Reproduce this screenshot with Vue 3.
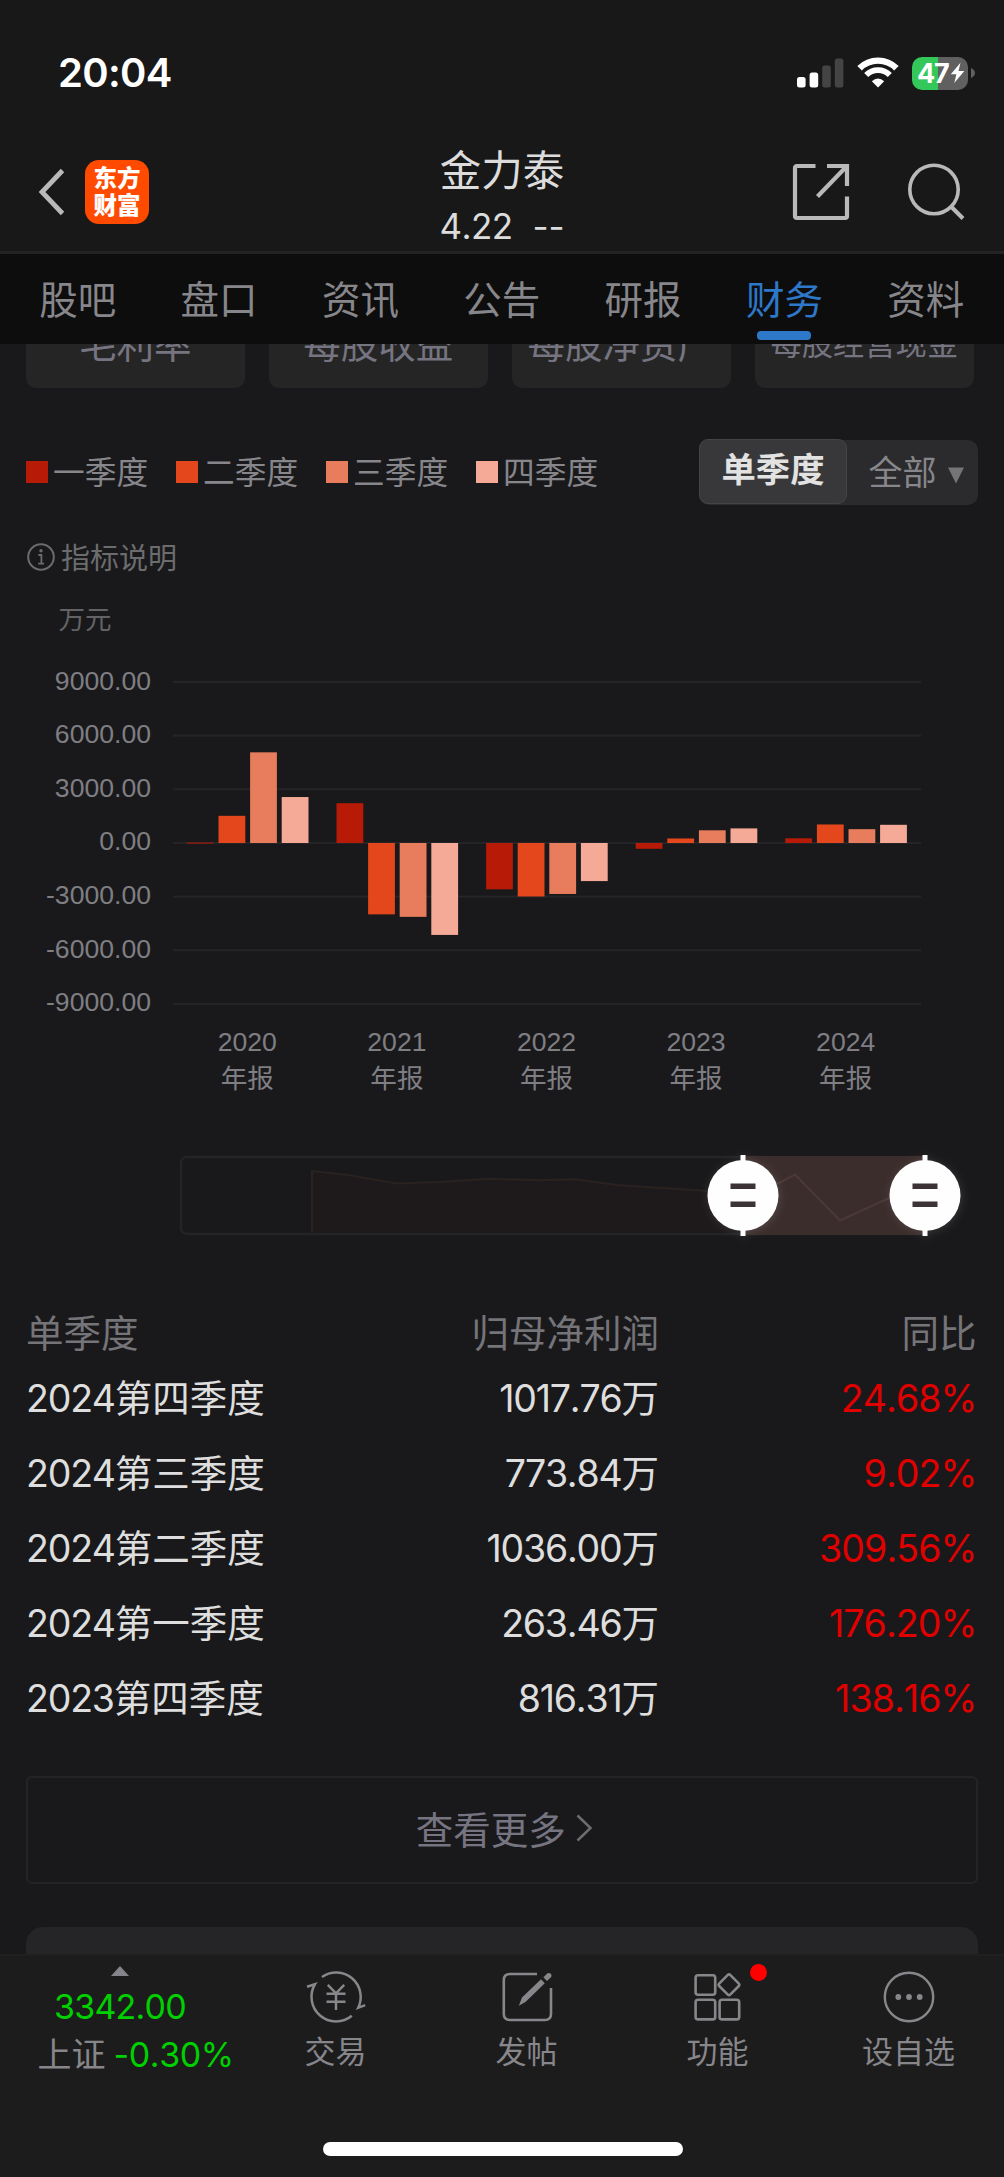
<script setup>
const tabs = ['股吧', '盘口', '资讯', '公告', '研报', '财务', '资料']
const activeTab = '财务'
const chips = ['毛利率', '每股收益', '每股净资产', '每股经营现金']

const quarters = [
  { name: '一季度', color: '#b71a06' },
  { name: '二季度', color: '#e5471c' },
  { name: '三季度', color: '#e77d5d' },
  { name: '四季度', color: '#f5aa98' },
]

const ticks = [9000, 6000, 3000, 0, -3000, -6000, -9000]
const years = [
  { year: 2020, values: [25, 1520, 5070, 2570] },
  { year: 2021, values: [2225, -3990, -4130, -5140] },
  { year: 2022, values: [-2590, -2990, -2850, -2130] },
  { year: 2023, values: [-325, 253, 709.8, 816.31] },
  { year: 2024, values: [263.46, 1036, 773.84, 1017.76] },
]

const unit = 53.65 / 3000
const zeroY = 162
const bars = years.flatMap((group, g) =>
  group.values.map((value, q) => ({
    key: `${group.year}-${q}`,
    x: 13.9 + g * 149.6 + q * 31.6,
    y: value > 0 ? zeroY - value * unit : zeroY,
    height: Math.max(Math.abs(value) * unit, 1),
    color: quarters[q].color,
  })),
)

const rows = [
  { period: '2024', label: '第四季度', profit: '1017.76', change: '24.68%' },
  { period: '2024', label: '第三季度', profit: '773.84', change: '9.02%' },
  { period: '2024', label: '第二季度', profit: '1036.00', change: '309.56%' },
  { period: '2024', label: '第一季度', profit: '263.46', change: '176.20%' },
  { period: '2023', label: '第四季度', profit: '816.31', change: '138.16%' },
]
</script>

<template>
  <div class="screen">
    <div class="status">
      <span class="time">20:04</span>
      <div class="status-icons">
        <svg class="signal" width="47" height="30" viewBox="0 0 47 30">
          <rect x="0" y="19" width="8.6" height="10.5" rx="2.5" fill="#fff" />
          <rect x="12.6" y="14.5" width="8.6" height="15" rx="2.5" fill="#fff" />
          <rect x="25.2" y="7.5" width="8.6" height="22" rx="2.5" fill="#444" />
          <rect x="37.8" y="0.5" width="8.6" height="29" rx="2.5" fill="#444" />
        </svg>
        <svg class="wifi" width="42" height="32" viewBox="0 0 42 32">
          <g fill="none" stroke="#fff">
            <path d="M2.6 11.3 A26 26 0 0 1 39.4 11.3" stroke-width="6.4" />
            <path d="M9.2 18 A16.8 16.8 0 0 1 32.8 18" stroke-width="5.8" />
          </g>
          <path d="M21 30.5 L14.8 24.2 Q21 18.8 27.2 24.2 Z" fill="#fff" />
        </svg>
        <div class="battery">
          <span>47</span>
          <svg width="15" height="22" viewBox="0 0 15 22">
            <path d="M10.5 0.8 L0.8 12.2 H6.4 L4.3 21 L14.3 9.1 H8.5 Z" fill="#fff" />
          </svg>
        </div>
        <svg class="cap" width="4" height="12" viewBox="0 0 4 12">
          <path d="M0 1 Q4 3 4 6 Q4 9 0 11 Z" fill="#606060" />
        </svg>
      </div>
    </div>

    <header class="header">
      <div class="header-side">
        <svg width="26" height="48" viewBox="0 0 26 48">
          <path d="M24.5 2.5 L4 24 L24.5 45.5" fill="none" stroke="#b9b9b9" stroke-width="4.8" />
        </svg>
        <div class="logo"><span>东方</span><span>财富</span></div>
      </div>
      <div class="title">
        <div class="name">金力泰</div>
        <div class="price"><span>4.22</span><span class="dashes">--</span></div>
      </div>
      <div class="header-side right">
        <svg width="58" height="58" viewBox="0 0 58 58" fill="none" stroke="#b9b9b9" stroke-width="4.2">
          <path d="M23.5 3 H5 Q3 3 3 5 V53 Q3 55 5 55 H53 Q55 55 55 53 V33.5" />
          <path d="M35 3 H55 V23" />
          <path d="M54 4 L25.5 33.5" />
        </svg>
        <svg width="58" height="58" viewBox="0 0 58 58" fill="none" stroke="#b9b9b9">
          <circle cx="27" cy="26.5" r="24.2" stroke-width="3.6" />
          <path d="M44 43.5 L56 55.5" stroke-width="4" />
        </svg>
      </div>
    </header>

    <nav class="tabs">
      <div v-for="tab in tabs" :key="tab" class="tab" :class="{ active: tab === activeTab }">{{ tab }}</div>
    </nav>

    <main class="content">
      <div class="chips">
        <div v-for="(chip, i) in chips" :key="chip" class="chip" :class="{ small: i === 3 }">{{ chip }}</div>
      </div>

      <div class="legend-row">
        <div class="legend">
          <div v-for="q in quarters" :key="q.name" class="legend-item">
            <i :style="{ background: q.color }"></i><span>{{ q.name }}</span>
          </div>
        </div>
        <div class="segment">
          <div class="segment-on">单季度</div>
          <div class="segment-off">
            <span>全部</span>
            <svg width="16" height="17" viewBox="0 0 16 17"><path d="M0 0.5 H16 L8 16.5 Z" fill="#757575" /></svg>
          </div>
        </div>
      </div>

      <div class="note">
        <svg width="30" height="30" viewBox="0 0 30 30">
          <circle cx="15" cy="15" r="12.8" fill="none" stroke="#6c6c6e" stroke-width="2" />
          <circle cx="15" cy="8.8" r="1.7" fill="#6c6c6e" />
          <path d="M12.4 13 H15.4 V21.3 M12.2 21.6 H18" fill="none" stroke="#6c6c6e" stroke-width="1.8" />
        </svg>
        <span>指标说明</span>
      </div>
      <div class="unit">万元</div>

      <div class="chart">
        <div class="y-axis">
          <span v-for="t in ticks" :key="t">{{ t.toFixed(2) }}</span>
        </div>
        <div class="plot">
          <svg width="748" height="326" viewBox="0 0 748 326">
            <rect v-for="(t, i) in ticks" :key="t" x="0" :y="i * 53.65" width="748" height="2" fill="#252527" />
            <rect v-for="b in bars" :key="b.key" :x="b.x" :y="b.y" width="26.8" :height="b.height" :fill="b.color" />
          </svg>
          <div class="x-axis">
            <div v-for="g in years" :key="g.year">{{ g.year }}<br />年报</div>
          </div>
        </div>
      </div>

      <svg class="range" width="804" height="100" viewBox="0 0 804 100">
        <defs>
          <filter id="glow" x="-30%" y="-30%" width="160%" height="160%">
            <feDropShadow dx="1" dy="1" stdDeviation="4" flood-color="#fff" flood-opacity="0.13" />
          </filter>
        </defs>
        <rect x="1" y="12" width="745" height="77" rx="6" fill="none" stroke="#242426" stroke-width="2.4" />
        <path
          d="M132 26 L168 30 L217 38.5 L260 37 L308 33.7 L357 35.3 L395 34.3 L437 40 L528 46 L575 46 L599 38 L615 29.5 L660 75.5 L707 54 L746 38 V88 H132 Z"
          fill="#1e1a1c"
        />
        <rect x="563" y="11" width="182" height="79" fill="#3b2d2c" />
        <path
          d="M132 88 V26 L168 30 L217 38.5 L260 37 L308 33.7 L357 35.3 L395 34.3 L437 40 L528 46"
          fill="none" stroke="#2a2220" stroke-width="2"
        />
        <path d="M575 46 L599 38 L615 29.5 L660 75.5 L707 54 L746 38" fill="none" stroke="#4b3936" stroke-width="2" />
        <g v-for="x in [563, 745]" :key="x">
          <g fill="#fefefe" filter="url(#glow)">
            <rect :x="x - 2.5" y="10" width="5" height="81" />
            <circle :cx="x" cy="50.5" r="35.5" />
          </g>
          <rect :x="x - 12.5" y="38.5" width="25" height="5.5" fill="#3b3335" />
          <rect :x="x - 12.5" y="56.5" width="25" height="5.5" fill="#3b3335" />
        </g>
      </svg>

      <section class="table">
        <div class="row head"><span>单季度</span><span>归母净利润</span><span>同比</span></div>
        <div v-for="r in rows" :key="r.period + r.label" class="row">
          <span><b>{{ r.period }}</b>{{ r.label }}</span>
          <span><b>{{ r.profit }}</b>万</span>
          <span class="up">{{ r.change }}</span>
        </div>
      </section>

      <div class="more">
        <span>查看更多</span>
        <svg width="18" height="30" viewBox="0 0 18 30">
          <path d="M2.5 2.5 L15.5 15 L2.5 27.5" fill="none" stroke="#6d6d6f" stroke-width="2.5" />
        </svg>
      </div>
      <div class="next-card"></div>
    </main>

    <footer class="bottom">
      <div class="bar">
        <div class="index">
          <svg width="18" height="10" viewBox="0 0 18 10"><path d="M9 0 L18 10 H0 Z" fill="#85848a" /></svg>
          <div class="value">3342.00</div>
          <div class="change"><span>上证</span><b>-0.30%</b></div>
        </div>
        <div class="action">
          <svg width="60" height="56" viewBox="0 0 60 56" fill="none" stroke="#87868b" stroke-width="2.5">
            <path d="M15.9 7.9 A24.6 24.6 0 0 1 52.2 38.8 L59.2 36.2" />
            <path d="M45.8 46.8 A24.6 24.6 0 0 1 9 15.2 L1 17.8" />
            <path d="M21.8 15.8 L30 24.3 L38.2 15.8 M20.5 24.8 H39.5 M20.5 32.8 H39.5 M30 24 V41" />
          </svg>
          <span>交易</span>
        </div>
        <div class="action">
          <svg width="60" height="56" viewBox="0 0 60 56" fill="none" stroke="#87868b" stroke-width="2.6">
            <path d="M40 5 H13 Q6.8 5 6.8 11 V45 Q6.8 51 13 51 H48 Q54 51 54 45 V19" />
            <path d="M21.8 36.8 L25 28.5 L44 10.3 L47.8 14.2 L28.5 33 Z" fill="#87868b" stroke="none" />
            <path d="M46.4 8.2 L50.5 4.2 Q52.5 3.4 54.2 5.2 Q55 7 54 8.3 L49.9 12 Z" fill="#87868b" stroke="none" />
          </svg>
          <span>发帖</span>
        </div>
        <div class="action">
          <div class="icon-wrap">
            <svg width="60" height="56" viewBox="0 0 60 56" fill="none" stroke="#87868b" stroke-width="2.6">
              <rect x="7.6" y="6.2" width="19.6" height="19.6" rx="2.5" />
              <rect x="7.6" y="30.8" width="19.6" height="19.6" rx="2.5" />
              <rect x="31.6" y="30.8" width="19.6" height="19.6" rx="2.5" />
              <rect x="33.2" y="8" width="15.6" height="15.6" rx="2" transform="rotate(45 41 15.8)" />
            </svg>
            <i class="dot"></i>
          </div>
          <span>功能</span>
        </div>
        <div class="action">
          <svg width="60" height="56" viewBox="0 0 60 56">
            <circle cx="30" cy="28" r="24.2" fill="none" stroke="#87868b" stroke-width="2.4" />
            <g fill="#87868b"><circle cx="19.3" cy="28" r="2.9" /><circle cx="30" cy="28" r="2.9" /><circle cx="40.7" cy="28" r="2.9" /></g>
          </svg>
          <span>设自选</span>
        </div>
      </div>
      <div class="home"></div>
    </footer>
  </div>
</template>

<style>
body {
  background: #19191b;
}
</style>

<style scoped>
* {
  box-sizing: border-box;
}
svg {
  display: block;
  flex: none;
}
.screen {
  width: 1004px;
  height: 2177px;
  overflow: hidden;
  display: flex;
  flex-direction: column;
  background: #19191b;
  color: #87868b;
  font-family: Inter, 'Noto Sans CJK SC', sans-serif;
  font-kerning: none;
  white-space: nowrap;
}
.status {
  height: 146px;
  padding: 48px 29px 0 58px;
  display: flex;
  justify-content: space-between;
  background: #181818;
}
.time {
  height: 50px;
  line-height: 50px;
  font-size: 40px;
  font-weight: 600;
  letter-spacing: -0.7px;
  color: #fff;
}
.status-icons {
  height: 50px;
  display: flex;
  align-items: center;
}
.wifi {
  margin: -1px 13px 0 13px;
}
.battery {
  width: 56px;
  height: 33px;
  border-radius: 10px;
  display: flex;
  align-items: center;
  padding-left: 5px;
  background: linear-gradient(90deg, #34c759 47%, #606060 47%);
}
.battery span {
  font-size: 27px;
  line-height: 33px;
  font-weight: 700;
  color: #fff;
  width: 33px;
  letter-spacing: -1.2px;
}
.cap {
  margin-left: 3px;
}
.header {
  height: 108px;
  display: grid;
  grid-template-columns: 1fr 260px 1fr;
  background: #181818;
  border-bottom: 3px solid #232323;
}
.header-side {
  display: flex;
  align-items: center;
  padding: 0 0 18px 38px;
  gap: 21px;
}
.right {
  justify-content: flex-end;
  gap: 57px;
  padding: 0 39px 19px 0;
}
.logo {
  width: 64px;
  height: 64px;
  border-radius: 14px;
  background: #ff4a00;
  display: flex;
  flex-direction: column;
  align-items: center;
  padding-top: 6px;
  color: #fff;
  font-size: 23.5px;
  font-weight: 900;
  line-height: 26.5px;
}
.title {
  text-align: center;
  color: #dcdcdc;
}
.name {
  font-size: 41.5px;
  line-height: 50px;
}
.price {
  font-size: 35px;
  line-height: 60px;
  display: flex;
  justify-content: center;
  gap: 20px;
  letter-spacing: -0.6px;
}
.dashes {
  letter-spacing: 0;
}
.tabs {
  height: 90px;
  flex: none;
  background: #0d0d0d;
  padding: 0 7.5px 0 7px;
  display: grid;
  grid-template-columns: repeat(7, 1fr);
}
.tab {
  display: flex;
  flex-direction: column;
  align-items: center;
  font-size: 38.5px;
  line-height: 92px;
  height: 90px;
}
.tab.active {
  color: #2e78c9;
}
.tab.active::after {
  content: '';
  width: 54px;
  height: 9px;
  margin-top: -15px;
  border-radius: 4px;
  background: #2e78c9;
}
.content {
  height: 1610px;
  padding: 0 26.5px 0 26px;
  display: flex;
  flex-direction: column;
}
.chips {
  height: 44px;
  flex: none;
  overflow: hidden;
  display: grid;
  grid-template-columns: repeat(4, 218.7px);
  gap: 24.3px;
  align-content: end;
}
.chip {
  height: 88px;
  line-height: 89px;
  text-align: center;
  border-radius: 10px;
  background: #252525;
  color: #757480;
  font-size: 37.5px;
}
.chip.small {
  font-size: 31.3px;
}
.legend-row {
  height: 66px;
  flex: none;
  margin-top: 51px;
  display: flex;
  justify-content: space-between;
}
.legend {
  display: flex;
}
.legend-item {
  width: 150px;
  display: flex;
  align-items: center;
  font-size: 31.7px;
}
.legend-item span {
  margin-top: -4px;
}
.legend-item i {
  width: 22px;
  height: 22px;
  margin-right: 5px;
}
.segment {
  width: 278.5px;
  height: 65px;
  margin-top: 1px;
  border-radius: 10px;
  background: #2b2b2d;
  display: flex;
}
.segment-on {
  width: 148px;
  height: 65px;
  margin-top: -1px;
  border: 1.5px solid #444446;
  border-radius: 9px;
  background: #38383a;
  color: #e2e2e2;
  font-size: 34.3px;
  font-weight: 700;
  line-height: 59px;
  text-align: center;
}
.segment-off {
  display: flex;
  align-items: center;
  padding-left: 21.5px;
  font-size: 34px;
  gap: 11px;
}
.segment-off span {
  margin-top: -5px;
}
.segment-off svg {
  margin-top: 5px;
}
.note {
  height: 40px;
  flex: none;
  margin-top: 32px;
  display: flex;
  align-items: center;
  gap: 5px;
  font-size: 29px;
  color: #6c6c6e;
}
.note span {
  margin-top: -1.5px;
}
.unit {
  margin: 22px 0 0 32.5px;
  height: 40px;
  flex: none;
  line-height: 40px;
  font-size: 26.5px;
  color: #636366;
}
.chart {
  height: 464px;
  flex: none;
  margin-top: 16.5px;
  display: flex;
  font-family: 'Liberation Sans', 'Noto Sans CJK SC', sans-serif;
  font-size: 26.6px;
  color: #7f7e83;
}
.y-axis {
  width: 125px;
  margin-right: 21.5px;
  display: flex;
  flex-direction: column;
  text-align: right;
}
.y-axis span {
  height: 53.65px;
  line-height: 51px;
}
.plot {
  padding-top: 25px;
}
.x-axis {
  display: grid;
  grid-template-columns: repeat(5, 1fr);
  margin-top: 17px;
  text-align: center;
  line-height: 37.5px;
}
.range {
  margin: 25.5px 0 0 154px;
  overflow: visible;
}
.table {
  flex: none;
  margin-top: 60.5px;
}
.row {
  display: grid;
  grid-template-columns: 260px 373px 317.5px;
  height: 75px;
  line-height: 75px;
  font-size: 37.5px;
  color: #dedede;
}
.row b {
  font-weight: 400;
  letter-spacing: -1.2px;
}
.row span + span {
  text-align: right;
}
.row.head {
  height: 55px;
  line-height: 55px;
  color: #757479;
}
.row .up {
  color: #e00000;
  letter-spacing: -0.9px;
}
.more {
  height: 108px;
  margin-top: 40px;
  flex: none;
  border: 2.5px solid #242426;
  border-radius: 6px;
  display: flex;
  align-items: center;
  justify-content: center;
  gap: 9px;
  padding-left: 5px;
  font-size: 37.5px;
  color: #757480;
}
.more span {
  margin-top: -5px;
}
.more svg {
  margin-top: -3px;
}
.next-card {
  height: 32px;
  flex: none;
  margin-top: 43px;
  border-radius: 17px 17px 0 0;
  background: #252527;
}
.bottom {
  height: 223px;
  flex: none;
  position: relative;
  background: #1c1c1c;
  border-top: 2px solid #202020;
}
.bar {
  height: 187px;
  display: flex;
  padding-left: 20px;
}
.index {
  width: 220px;
  padding: 10px 18px 0 0;
}
.index svg {
  margin-left: 91px;
}
.value {
  margin-top: 9px;
  padding-left: 34px;
  font-size: 34px;
  line-height: 44px;
  letter-spacing: -0.8px;
  color: #00cf00;
}
.change {
  display: flex;
  gap: 8px;
  padding-left: 17.5px;
  margin-top: 1.5px;
  font-size: 34px;
  line-height: 48px;
}
.change b {
  font-weight: 400;
  color: #00cf00;
  letter-spacing: -0.4px;
}
.action {
  width: 191.2px;
  display: flex;
  flex-direction: column;
  align-items: center;
  padding-top: 13px;
  font-size: 31px;
  line-height: 50px;
}
.action > span {
  margin-top: 2px;
}
.icon-wrap {
  position: relative;
}
.dot {
  position: absolute;
  right: -19px;
  top: -5px;
  width: 17px;
  height: 17px;
  border-radius: 50%;
  background: #f00;
}
.home {
  width: 360px;
  height: 14px;
  margin: -1px 0 0 322.5px;
  border-radius: 7px;
  background: #fff;
}
</style>
